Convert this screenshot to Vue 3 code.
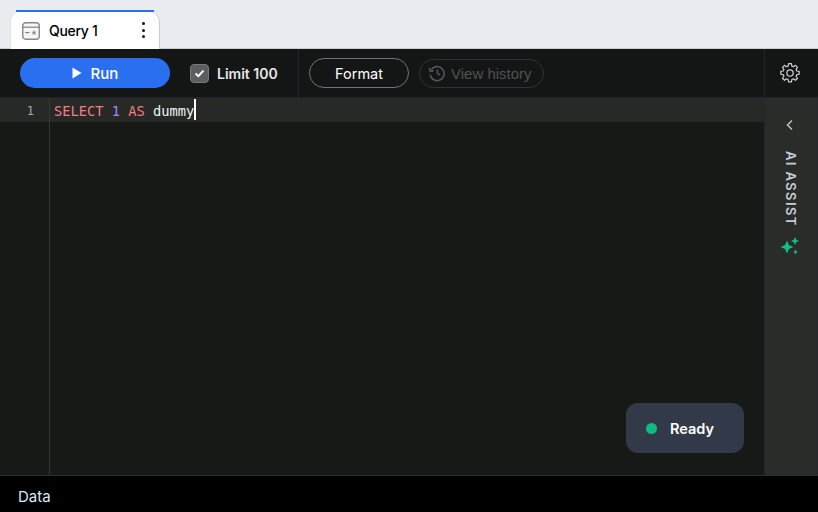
<script setup>
const title = 'Query 1'
</script>

<template>
  <div class="app">
    <div class="tabs">
      <div class="tab">
        <svg class="tab-icon" width="18" height="18" viewBox="0 0 18 18" fill="none">
          <rect x="0.75" y="0.75" width="16.5" height="16.5" rx="3" fill="#f6f6f7" stroke="#85888f" stroke-width="1.4" />
          <path d="M1 5.2H17" stroke="#85888f" stroke-width="1.3" />
          <path d="M3.2 10.6H7.4" stroke="#7d8088" stroke-width="1.2" />
          <path d="M12 7.8l.7 1.9 2 .1-1.6 1.2.6 2-1.7-1.1-1.7 1.1.6-2-1.6-1.2 2-.1z" fill="#8b8e96" />
        </svg>
        <span class="tab-title">{{ title }}</span>
        <span class="dots"><i></i><i></i><i></i></span>
      </div>
    </div>

    <div class="toolbar">
      <div class="tool-left">
        <button class="run">
          <svg width="10" height="12" viewBox="0 0 10 12"><path d="M.5.5v11l9-5.5z" fill="#fff" /></svg>
          <span>Run</span>
        </button>
        <label class="limit">
          <span class="check">
            <svg width="11" height="9" viewBox="0 0 11 9" fill="none"><path d="M1.5 4.6l2.8 2.6 5.2-5.6" stroke="#fff" stroke-width="2" /></svg>
          </span>
          <span>Limit 100</span>
        </label>
      </div>
      <div class="tool-mid">
        <button class="format">Format</button>
        <button class="history">
          <svg width="18" height="18" viewBox="0 0 18 18" fill="none" stroke="#55585d" stroke-width="1.5">
            <path d="M3.4 5.6A7 7 0 1 1 2.2 10.6" />
            <path d="M1.4 3.8l.8 3.6 3.6-.6" />
            <path d="M9.4 5.4v4l2.6 1.6" />
          </svg>
          <span>View history</span>
        </button>
      </div>
      <div class="tool-gear">
        <svg width="20" height="20" viewBox="0 0 24 24" fill="none" stroke="#c9ccd2" stroke-width="1.5" stroke-linejoin="round">
          <path d="M10.3 1.8h3.4l.5 2.9 2 .8 2.4-1.7 2.4 2.4-1.7 2.4.8 2 2.9.5v3.4l-2.9.5-.8 1.9 1.7 2.4-2.4 2.4-2.4-1.7-2 .8-.5 2.9h-3.4l-.5-2.9-2-.8-2.4 1.7-2.4-2.4 1.7-2.4-.8-1.9-2.9-.5v-3.4l2.9-.5.8-2-1.7-2.4 2.4-2.4 2.4 1.7 2-.8z" transform="translate(0 -1)" />
          <circle cx="12" cy="12" r="3.8" />
        </svg>
      </div>
    </div>

    <div class="main">
      <div class="editor">
        <div class="gutter">
          <div class="gutter-line">1</div>
        </div>
        <div class="code">
          <div class="code-line"><span class="kw">SELECT</span> <span class="num">1</span> <span class="kw">AS</span> <span class="id">dummy</span><span class="caret"></span></div>
        </div>
        <div class="status">
          <span class="dot"></span>
          <span>Ready</span>
        </div>
      </div>
      <div class="rail">
        <svg class="chev" width="8" height="12" viewBox="0 0 8 12" fill="none"><path d="M6 1.5L1.5 6 6 10.5" stroke="#c3c6cc" stroke-width="1.4" /></svg>
        <span class="ai">AI ASSIST</span>
        <svg class="spark" width="20" height="20" viewBox="0 0 20 20" fill="#0fbf85">
          <path d="M7 3.5l1.9 4.6L13.5 10l-4.6 1.9L7 16.5l-1.9-4.6L.5 10l4.600-1.900z" />
          <path d="M15 0l1.200 2.800L19 4l-2.800 1.200L15 8l-1.200-2.800L11 4l2.800-1.200z" />
          <path d="M15.500 12.500l.8 1.700 1.700.8-1.700.8-.8 1.700-.8-1.700-1.700-.8 1.700-.8z" />
        </svg>
      </div>
    </div>

    <div class="bottom">Data</div>
  </div>
</template>

<style>
html, body { margin: 0; background: #000; }
</style>

<style scoped>
.app { width: 818px; height: 512px; display: flex; flex-direction: column; font-family: Inter, "Liberation Sans", sans-serif; overflow: hidden; }
.tabs { height: 48px; background: #e9ecf1; border-bottom: 1px solid #c8ccd6; display: flex; align-items: flex-end; padding-left: 10px; }
.tab { width: 150px; height: 38px; background: #fff; border-right: 1px solid #c8ccd6; border-left: 1px solid #dfe2e8; border-radius: 12px 12px 0 0; display: flex; align-items: center; padding-left: 11px; box-sizing: border-box; position: relative; margin-bottom: -1px; }
.tab::before { content: ""; position: absolute; left: 5px; right: 5px; top: -1px; height: 2px; background: #2a6ff0; }
.tab-icon { margin-right: 9px; margin-top: 1px; }
.tab-title { font-size: 14px; font-weight: 500; color: #000; letter-spacing: -0.3px; }
.dots { position: absolute; right: 14px; top: 11px; display: flex; flex-direction: column; gap: 3.5px; }
.dots i { width: 3px; height: 3px; border-radius: 50%; background: #111; display: block; }
.toolbar { height: 48px; background: #141615; display: flex; align-items: center; border-bottom: 1px solid #1f2330; }
.tool-left { width: 299px; height: 48px; display: flex; align-items: center; padding-left: 20px; box-sizing: border-box; border-right: 1px solid #22252e; }
.run { width: 150px; height: 30px; border: 0; border-radius: 15px; background: #2a6ff0; color: #fff; font: 500 15px Inter, sans-serif; display: flex; align-items: center; justify-content: center; gap: 9px; padding: 0; }
.limit { margin-left: 20px; display: flex; align-items: center; gap: 8px; color: #e6e6e6; font-size: 14px; font-weight: 600; }
.check { width: 19px; height: 19px; border-radius: 4px; background: #5c5e62; border: 1px solid #77797d; box-sizing: border-box; display: flex; align-items: center; justify-content: center; }
.tool-mid { flex: 1; display: flex; align-items: center; gap: 10px; padding-left: 10px; }
.format { width: 100px; height: 30px; background: transparent; border: 1px solid #6f737c; border-radius: 15px; color: #fff; font: 400 14.5px Inter, sans-serif; padding: 0; box-sizing: border-box; }
.history { width: 125px; height: 29px; background: transparent; border: 1px solid #2e3136; border-radius: 15px; color: #4e5156; font: 400 15px "Liberation Sans", Arial, sans-serif; display: flex; align-items: center; gap: 5px; padding: 0 0 0 8px; box-sizing: border-box; }
.tool-gear { width: 54px; height: 48px; border-left: 1px solid #22252e; display: flex; align-items: center; justify-content: center; box-sizing: border-box; padding-right: 3px; }
.main { height: 377px; display: flex; border-bottom: 1px solid #2a2c33; }
.editor { flex: 1; background: #171917; position: relative; display: flex; }
.gutter { width: 50px; border-right: 1px solid #34363a; box-sizing: border-box; }
.gutter-line { height: 24px; background: #272927; color: #93a9bd; font: 12px/26px "DejaVu Sans Mono", monospace; text-align: right; padding-right: 15px; box-sizing: border-box; }
.code { flex: 1; }
.code-line { height: 24px; background: #272927; padding-left: 4px; font: 13.7px/26px "DejaVu Sans Mono", monospace; white-space: pre; color: #fff; }
.kw { color: #f47c84; }
.num { color: #9d8cf5; }
.id { color: #eef2f5; }
.caret { display: inline-block; width: 2px; height: 21px; background: #fff; vertical-align: top; margin-top: 1px; }
.status { position: absolute; right: 20px; bottom: 22px; width: 118px; height: 50px; border-radius: 12px; background: #323a49; display: flex; align-items: center; gap: 13px; padding-left: 20px; box-sizing: border-box; color: #fff; font-size: 14.5px; font-weight: 600; }
.dot { width: 11px; height: 11px; border-radius: 50%; background: #10bb82; }
.rail { width: 54px; background: #2a2c2a; border-left: 1px solid #22252e; border-right: 1px solid #22252e; box-sizing: border-box; display: flex; flex-direction: column; align-items: center; padding: 21px 3px 0 0; }
.ai { writing-mode: vertical-rl; font: 600 13px Inter, sans-serif; letter-spacing: 1.4px; color: #c7ccd6; margin: 20px 0 0 2px; }
.spark { margin-top: 10px; }
.bottom { flex: 1; background: #000; color: #dbe7f5; font-size: 15px; padding: 12px 0 0 18px; line-height: 18px; }
</style>
